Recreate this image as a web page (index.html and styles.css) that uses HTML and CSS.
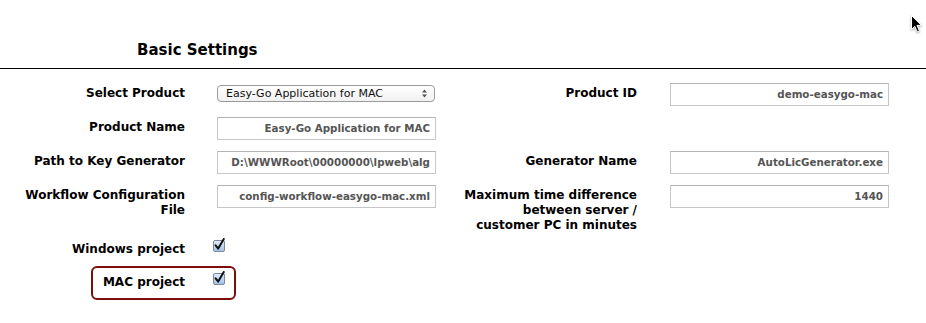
FILE: index.html
```html
<!DOCTYPE html>
<html>
<head>
<meta charset="utf-8">
<link rel="stylesheet" href="styles.css">
</head>
<body>
<div class="page">
  <h2 class="title">Basic Settings</h2>
  <div class="rule"></div>
  <div class="form">
    <div class="label">Select Product</div>
    <div class="field">
      <div class="select">
        <span class="select-text">Easy-Go Application for MAC</span>
        <svg class="select-arrows" width="7" height="9" viewBox="0 0 7 9"><path d="M3.5 0.5 L6 3.5 L1 3.5 Z M3.5 8.5 L6 5.5 L1 5.5 Z" fill="#555"/></svg>
      </div>
    </div>
    <div class="label right">Product ID</div>
    <div class="field"><div class="input">demo-easygo-mac</div></div>

    <div class="label">Product Name</div>
    <div class="field"><div class="input">Easy-Go Application for MAC</div></div>
    <div class="label right"></div>
    <div class="field"></div>

    <div class="label">Path to Key Generator</div>
    <div class="field"><div class="input">D:\WWWRoot\00000000\lpweb\alg</div></div>
    <div class="label right">Generator Name</div>
    <div class="field"><div class="input">AutoLicGenerator.exe</div></div>

    <div class="label">Workflow Configuration File</div>
    <div class="field"><div class="input">config-workflow-easygo-mac.xml</div></div>
    <div class="label right">Maximum time difference between server / customer PC in minutes</div>
    <div class="field"><div class="input">1440</div></div>
  </div>

  <div class="checks">
    <div class="check-row">
      <div class="check-label">Windows project</div>
      <svg class="checkbox" width="13" height="14" viewBox="0 0 13 14">
        <defs><linearGradient id="cb1" x1="0" y1="0" x2="0" y2="1"><stop offset="0" stop-color="#e4eefa"/><stop offset="1" stop-color="#9fc0e6"/></linearGradient></defs>
        <rect x="0.5" y="2.5" width="11" height="11" rx="1.5" fill="url(#cb1)" stroke="#7d8a99"/>
        <path d="M2.6 7.4 L5.2 10.6 L10.8 1" fill="none" stroke="#111" stroke-width="2" stroke-linecap="round" stroke-linejoin="round"/>
      </svg>
    </div>
    <div class="check-row highlight">
      <div class="check-label">MAC project</div>
      <svg class="checkbox" width="13" height="14" viewBox="0 0 13 14">
        <defs><linearGradient id="cb2" x1="0" y1="0" x2="0" y2="1"><stop offset="0" stop-color="#e4eefa"/><stop offset="1" stop-color="#9fc0e6"/></linearGradient></defs>
        <rect x="0.5" y="2.5" width="11" height="11" rx="1.5" fill="url(#cb2)" stroke="#7d8a99"/>
        <path d="M2.6 7.4 L5.2 10.6 L10.8 1" fill="none" stroke="#111" stroke-width="2" stroke-linecap="round" stroke-linejoin="round"/>
      </svg>
    </div>
  </div>
</div>
<svg class="cursor" width="14" height="20" viewBox="0 0 14 20">
  <path d="M1.5 1.5 L1.5 15.5 L4.8 12.3 L7.2 17.8 L9.4 16.8 L7 11.4 L11.5 11.4 Z" fill="#000" stroke="#fff" stroke-width="1" stroke-linejoin="round"/>
</svg>
</body>
</html>
```
FILE: styles.css
```css
html, body {
  margin: 0;
  padding: 0;
  background: #fff;
}
body {
  font-family: "DejaVu Sans", sans-serif;
  color: #000;
  width: 926px;
  height: 323px;
  overflow: hidden;
  position: relative;
}
.page {
  padding-top: 41px;
}
.title {
  margin: 0 0 0 137px;
  font-size: 15px;
  font-weight: bold;
  line-height: 18px;
  height: 27px;
}
.rule {
  height: 1px;
  background: #000;
}
.form {
  display: grid;
  grid-template-columns: 197px 219px 234px 219px;
  row-gap: 11px;
  margin: 14px 0 0 20px;
  height: 148px;
}
.label {
  font-size: 12px;
  font-weight: bold;
  line-height: 15px;
  text-align: right;
  padding: 3px 32px 0 0;
}
.label.right {
  padding: 3px 33px 0 28px;
}
.field {
  min-height: 23px;
}
.input {
  box-sizing: border-box;
  height: 23px;
  border: 1px solid #c6c6c6;
  border-top-color: #b4b4b4;
  font-size: 10.3px;
  font-weight: bold;
  color: #555;
  text-align: right;
  line-height: 21px;
  padding: 0 5px;
  white-space: nowrap;
  overflow: hidden;
}
.select {
  box-sizing: border-box;
  margin-top: 2px;
  height: 17px;
  width: 218px;
  border: 1px solid #9a9a9a;
  border-radius: 4px;
  background: linear-gradient(#ffffff, #f1f1f1);
  display: flex;
  align-items: center;
  justify-content: space-between;
  padding: 0 6px 0 8px;
  font-size: 11px;
  color: #111;
}
.select-arrows {
  display: block;
}
.check-row {
  display: flex;
  align-items: flex-start;
  height: 33px;
  padding-left: 20px;
}
.check-label {
  width: 165px;
  text-align: right;
  font-size: 12px;
  font-weight: bold;
  line-height: 15px;
  margin-top: 11px;
}
.checkbox {
  display: block;
  margin-left: 28px;
  margin-top: 7px;
}
.check-row.highlight {
  box-sizing: border-box;
  margin: 2px 0 0 91px;
  width: 145px;
  height: 34px;
  padding-left: 0;
  border: 2px solid #7d0c0c;
  border-radius: 6px;
}
.check-row.highlight .check-label {
  width: 92px;
  margin-top: 7px;
}
.check-row.highlight .checkbox {
  margin-top: 3px;
}
.cursor {
  position: absolute;
  left: 910px;
  top: 14px;
  filter: drop-shadow(0 1px 1px rgba(0,0,0,0.35));
}
```
